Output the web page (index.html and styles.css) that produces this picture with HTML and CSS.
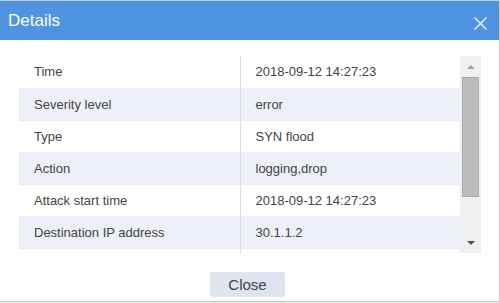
FILE: index.html
```html
<!DOCTYPE html>
<html lang="en">
<head>
    <meta charset="UTF-8">
    <title>Details</title>
    <link rel="stylesheet" href="styles.css">
</head>
<body>
    <div class="dialog">
        <div class="dialog-header">
            <h1 class="dialog-title">Details</h1>
            <svg class="dialog-close" width="13" height="13" viewBox="0 0 13 13">
                <path d="M0.5 0.5 L12.5 12.5 M12.5 0.5 L0.5 12.5" stroke="#fff" stroke-width="1.2" fill="none"/>
            </svg>
        </div>

        <div class="dialog-body">
            <div class="detail-box">
                <div class="detail-scroll">
                    <table class="detail-table">
                        <tr><td>Time</td><td>2018-09-12 14:27:23</td></tr>
                        <tr><td>Severity level</td><td>error</td></tr>
                        <tr><td>Type</td><td>SYN flood</td></tr>
                        <tr><td>Action</td><td>logging,drop</td></tr>
                        <tr><td>Attack start time</td><td>2018-09-12 14:27:23</td></tr>
                        <tr><td>Destination IP address</td><td>30.1.1.2</td></tr>
                        <tr><td></td><td></td></tr>
                    </table>
                </div>
                <div class="scrollbar">
                    <div class="scroll-btn"><span class="arrow-up"></span></div>
                    <div class="scroll-thumb"></div>
                    <div class="scroll-rest"></div>
                    <div class="scroll-btn"><span class="arrow-down"></span></div>
                </div>
            </div>

            <div class="dialog-footer">
                <button class="close-button">Close</button>
            </div>
        </div>
    </div>
</body>
</html>
```

FILE: styles.css
```css
* {
    margin: 0;
    padding: 0;
    box-sizing: border-box;
}

body {
    font-family: "Liberation Sans", Arial, sans-serif;
    background: #fff;
    color: #444;
    width: 500px;
    height: 303px;
    overflow: hidden;
}

.dialog {
    width: 500px;
    height: 302px;
    border: 1px solid #c9c9c9;
    border-left: none;
    background: #fff;
    box-shadow: 0 1px 1px rgba(0, 0, 0, 0.08);
    display: flex;
    flex-direction: column;
}

.dialog-header {
    height: 39px;
    background: #4f94e0;
    display: flex;
    align-items: center;
    justify-content: space-between;
    padding: 0 12px 0 8px;
}

.dialog-title {
    color: #fff;
    font-size: 17px;
    font-weight: normal;
}

.dialog-close {
    display: block;
    margin-top: 5px;
}

.dialog-body {
    flex: 1;
    padding: 16px 18px 0 19px;
}

.detail-box {
    display: flex;
    width: 462px;
    height: 197px;
}

.detail-scroll {
    width: 441px;
    height: 197px;
    overflow: hidden;
}

.detail-table {
    width: 441px;
    border-collapse: collapse;
    font-size: 13px;
}

.detail-table tr:nth-child(even) {
    background: #edf0f7;
}

.detail-table td {
    height: 32px;
    padding: 0 15px;
    border-bottom: 1px solid #e9ecf2;
}

.detail-table td:first-child {
    width: 221px;
}

.detail-table td:last-child {
    border-left: 1px solid #dedede;
}

.scrollbar {
    width: 21px;
    background: #f0f0f0;
    display: flex;
    flex-direction: column;
}

.scroll-btn {
    height: 21px;
    display: flex;
    align-items: center;
    justify-content: center;
}

.arrow-up {
    width: 0;
    height: 0;
    border-left: 4px solid transparent;
    border-right: 4px solid transparent;
    border-bottom: 4px solid #a3a3a3;
}

.arrow-down {
    width: 0;
    height: 0;
    border-left: 4px solid transparent;
    border-right: 4px solid transparent;
    border-top: 4px solid #505050;
}

.scroll-thumb {
    height: 120px;
    margin: 0 2px 0 2px;
    background: #bcbcbc;
    border: 1px solid #a9a9a9;
}

.scroll-rest {
    flex: 1;
}

.dialog-footer {
    display: flex;
    justify-content: center;
    padding: 19px 5px 0 0;
}

.close-button {
    width: 75px;
    height: 25px;
    border: none;
    border-radius: 2px;
    background: #dee4f0;
    color: #444;
    font-family: "Liberation Sans", Arial, sans-serif;
    font-size: 15px;
}
```
